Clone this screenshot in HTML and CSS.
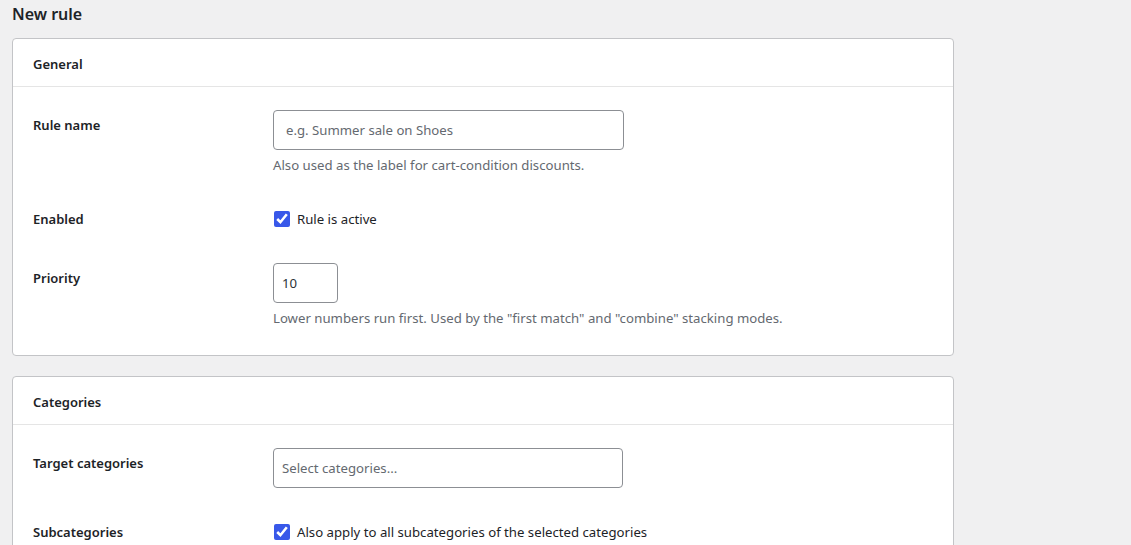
FILE: index.html
```html
<!DOCTYPE html>
<html lang="en">
<head>
    <meta charset="UTF-8">
    <meta name="viewport" content="width=device-width, initial-scale=1.0">
    <title>New rule</title>
    <link rel="stylesheet" href="styles.css">
</head>
<body>
    <div class="wrap">
        <h1 class="page-title">New rule</h1>

        <!-- General settings -->
        <div class="card">
            <div class="card-header">General</div>
            <div class="card-body">
                <div class="row">
                    <label class="row-label text-label" for="ruleName">Rule name</label>
                    <div class="row-field">
                        <input type="text" id="ruleName" class="text-input wide" placeholder="e.g. Summer sale on Shoes">
                        <p class="description">Also used as the label for cart-condition discounts.</p>
                    </div>
                </div>
                <div class="row">
                    <div class="row-label">Enabled</div>
                    <div class="row-field">
                        <label class="check"><input type="checkbox" checked> Rule is active</label>
                    </div>
                </div>
                <div class="row">
                    <label class="row-label text-label" for="priority">Priority</label>
                    <div class="row-field">
                        <input type="number" id="priority" class="text-input small" value="10">
                        <p class="description">Lower numbers run first. Used by the "first match" and "combine" stacking modes.</p>
                    </div>
                </div>
            </div>
        </div>

        <!-- Categories -->
        <div class="card">
            <div class="card-header">Categories</div>
            <div class="card-body">
                <div class="row">
                    <label class="row-label text-label" for="categories">Target categories</label>
                    <div class="row-field">
                        <input type="text" id="categories" class="text-input wide select-input" placeholder="Select categories...">
                    </div>
                </div>
                <div class="row">
                    <div class="row-label">Subcategories</div>
                    <div class="row-field">
                        <label class="check"><input type="checkbox" checked> Also apply to all subcategories of the selected categories</label>
                    </div>
                </div>
            </div>
        </div>
    </div>
</body>
</html>
```

FILE: styles.css
```css
body {
    margin: 0;
    background-color: #f0f0f1;
    color: #1d2327;
    font-family: "Noto Sans", "Open Sans", sans-serif;
    font-size: 13.2px;
    line-height: 20px;
}
.wrap {
    padding: 2px 12px 0;
}
.page-title {
    margin: 0 0 12px;
    font-size: 16px;
    font-weight: 600;
    line-height: 24px;
}
.card {
    width: 942px;
    box-sizing: border-box;
    background-color: #fff;
    border: 1px solid #c3c4c7;
    border-radius: 4px;
    margin-bottom: 20px;
}
.card-header {
    padding: 15px 20px 12px;
    border-bottom: 1px solid #e5e5e5;
    font-size: 13px;
    font-weight: 600;
}
.card-body {
    display: flex;
    flex-direction: column;
    gap: 34px;
    padding: 23px 20px 27px;
}
.row {
    display: grid;
    grid-template-columns: 240px 1fr;
    align-items: start;
}
.row-label {
    font-size: 13px;
    font-weight: 600;
}
.text-label {
    padding-top: 5px;
}
.text-input {
    box-sizing: border-box;
    height: 40px;
    border: 1px solid #8c8f94;
    border-radius: 4px;
    font-family: inherit;
    font-size: 13.2px;
    color: #2c3338;
    padding: 0 12px;
    margin: 0;
}
.text-input::placeholder {
    color: #646970;
}
.wide {
    width: 351px;
}
.small {
    width: 65px;
    padding: 0 8px;
}
.select-input {
    width: 350px;
    padding: 0 8px;
}
.description {
    margin: 5px 0 0;
    color: #646970;
}
.check {
    display: flex;
    align-items: center;
    gap: 7px;
}
.check input {
    width: 16px;
    height: 16px;
    margin: 0 0 0 1px;
    accent-color: #3858e9;
}
```
